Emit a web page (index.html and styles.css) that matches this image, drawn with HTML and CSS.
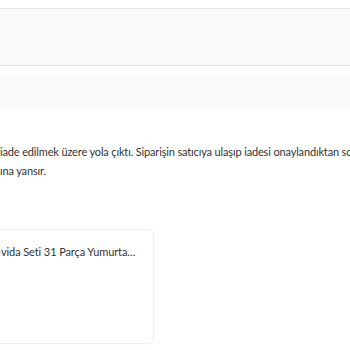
FILE: index.html
```html
<!DOCTYPE html>
<html lang="tr">
<head>
    <meta charset="UTF-8">
    <title>İade Detayı</title>
    <link rel="stylesheet" href="styles.css">
</head>
<body>
<div class="page">
    <div class="top_bar"></div>
    <div class="status_box"></div>
    <div class="info_box"></div>

    <div class="message">
        <p class="line">iade edilmek üzere yola çıktı. Siparişin satıcıya ulaşıp iadesi onaylandıktan sonra</p>
        <p class="line">ına yansır.</p>
    </div>

    <div class="product_card">
        <p class="product_name">vida Seti 31 Parça Yumurta Tavası ve Tencere</p>
    </div>
</div>
</body>
</html>
```

FILE: styles.css
```css
body {
    margin: 0;
    background-color: #fff;
    font-family: Lato, "Noto Sans", sans-serif;
    color: #333;
}

.page {
    width: 350px;
    height: 350px;
    overflow: hidden;
}

.top_bar {
    height: 8px;
    border-bottom: 1px solid #e6e6e6;
}

.status_box {
    height: 56px;
    background-color: #fafafa;
    border-bottom: 1px solid #e6e6e6;
}

.info_box {
    height: 32px;
    margin-top: 10px;
    background-color: #fafafa;
}

.message {
    margin-top: 34px;
}

.line {
    margin: 0;
    font-size: 11px;
    letter-spacing: -0.15px;
    line-height: 19px;
    white-space: nowrap;
}

.product_card {
    width: 162px;
    height: 115px;
    margin: 49px 0 0 -8px;
    box-sizing: border-box;
    border: 1px solid #eee;
    border-radius: 6px;
    box-shadow: 0 0 3px rgba(0, 0, 0, 0.04);
    padding: 13px 16px 0 8px;
}

.product_name {
    margin: 0;
    font-size: 11px;
    letter-spacing: -0.1px;
    line-height: 18px;
    white-space: nowrap;
    overflow: hidden;
    text-overflow: ellipsis;
}
```
